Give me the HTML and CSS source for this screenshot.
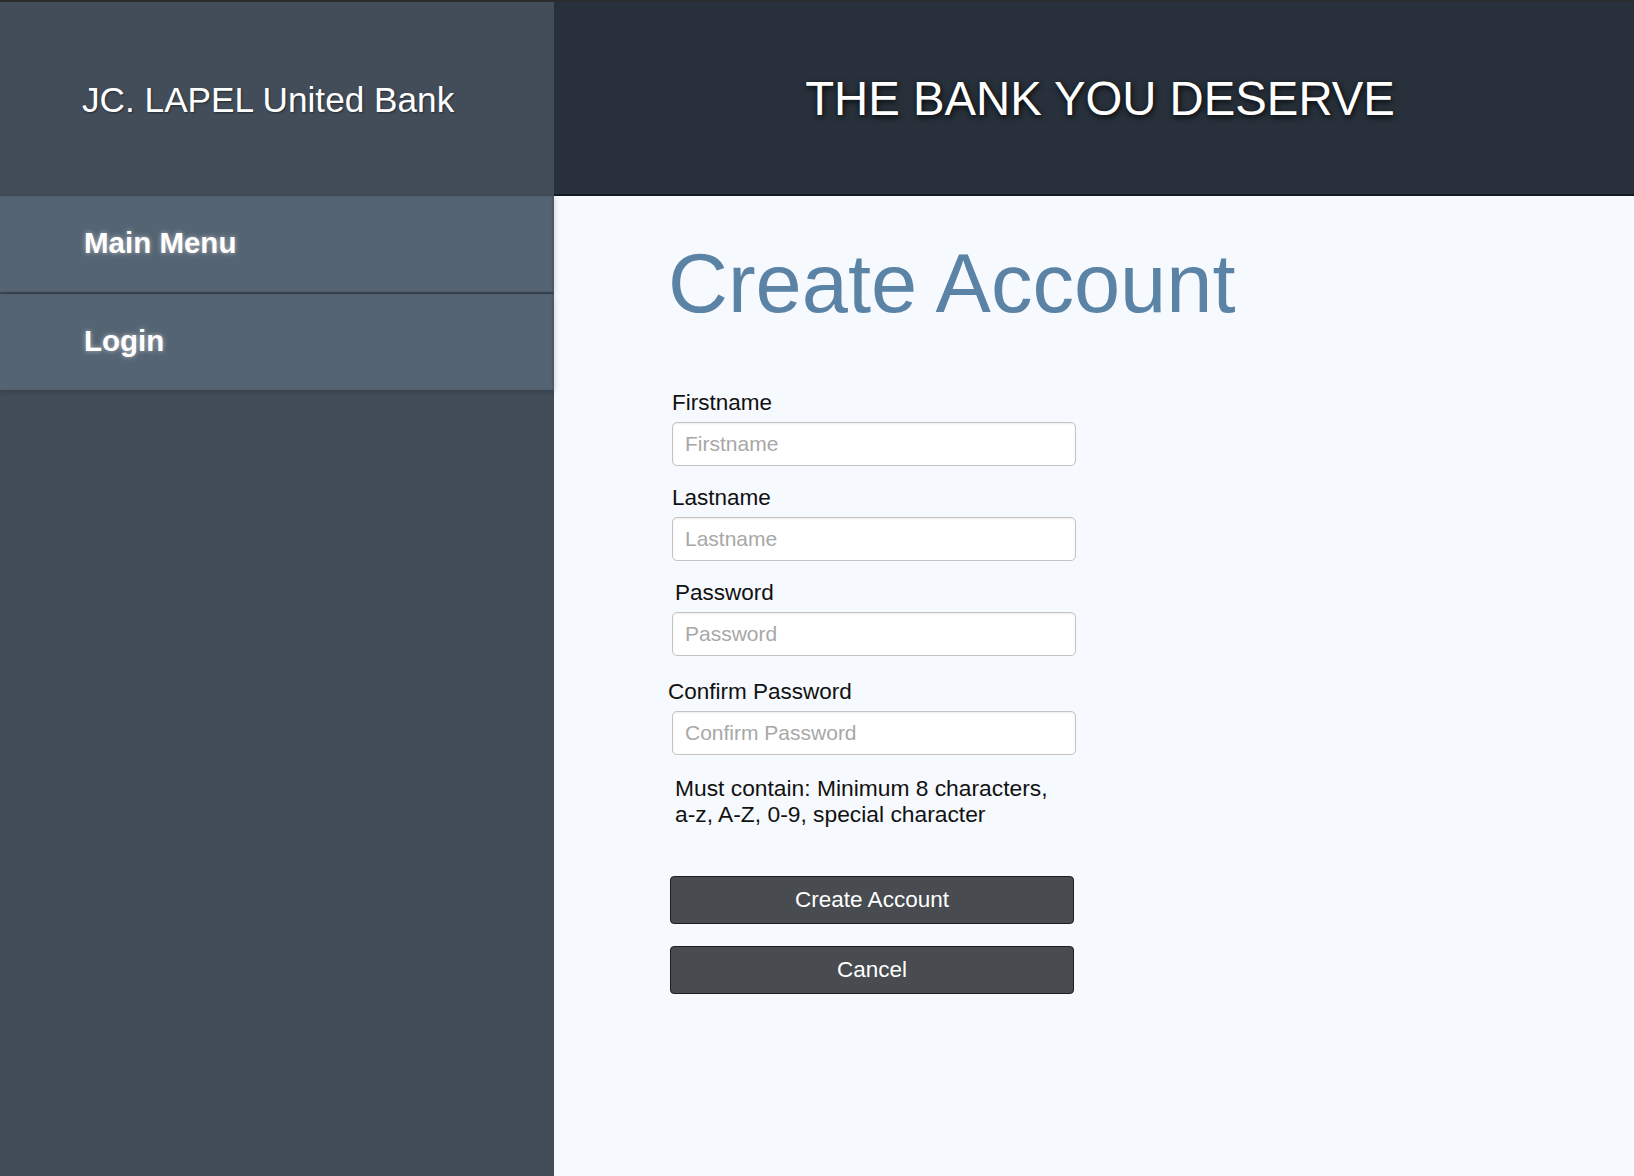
FILE: index.html
```html
<!DOCTYPE html>
<html lang="en">
<head>
<meta charset="utf-8">
<title>Create Account - JC. LAPEL United Bank</title>
<link rel="stylesheet" href="styles.css">
</head>
<body>
<div class="page">
  <aside class="sidebar">
    <div class="brand">JC. LAPEL United Bank</div>
    <nav class="menu">
      <a class="menu-item" href="#">Main Menu</a>
      <a class="menu-item" href="#">Login</a>
    </nav>
  </aside>
  <main class="main">
    <header class="banner">THE BANK YOU DESERVE</header>
    <section class="content">
      <h1 class="title">Create Account</h1>
      <form class="form">
        <div class="field">
          <label class="label">Firstname</label>
          <input class="input" type="text" placeholder="Firstname">
        </div>
        <div class="field">
          <label class="label">Lastname</label>
          <input class="input" type="text" placeholder="Lastname">
        </div>
        <div class="field">
          <label class="label label-indent">Password</label>
          <input class="input" type="password" placeholder="Password">
        </div>
        <div class="field field-spaced">
          <label class="label label-outdent">Confirm Password</label>
          <input class="input" type="password" placeholder="Confirm Password">
        </div>
        <p class="hint">Must contain: Minimum 8 characters,<br>a-z, A-Z, 0-9, special character</p>
        <div class="actions">
          <button class="btn" type="button">Create Account</button>
          <button class="btn" type="button">Cancel</button>
        </div>
      </form>
    </section>
  </main>
</div>
</body>
</html>
```
FILE: styles.css
```css
* { box-sizing: border-box; }

html, body {
  margin: 0;
  padding: 0;
  height: 100%;
}

body {
  font-family: "Liberation Sans", Arial, sans-serif;
  background: #f6f9fd;
  overflow: hidden;
}

.page {
  display: flex;
  height: 100vh;
  border-top: 2px solid #2a2c2e;
}

/* Sidebar */
.sidebar {
  width: 554px;
  flex: none;
  background: #424d59;
  display: flex;
  flex-direction: column;
}

.brand {
  height: 194px;
  display: flex;
  align-items: center;
  padding: 2px 0 0 82px;
  color: #ffffff;
  font-size: 35.2px;
  text-shadow: 1px 1px 2px rgba(0, 0, 0, 0.45);
}

.menu {
  display: flex;
  flex-direction: column;
  gap: 2px;
}

.menu-item {
  height: 96px;
  display: flex;
  align-items: center;
  padding: 0 0 2px 84px;
  background: #556473;
  color: #ffffff;
  font-weight: bold;
  font-size: 29.5px;
  text-decoration: none;
  text-shadow: 0 0 5px rgba(255, 255, 255, 0.55);
  box-shadow: 0 2px 6px rgba(0, 0, 0, 0.2), inset -2px 0 2px rgba(0, 0, 0, 0.12);
}

/* Main */
.main {
  flex: 1;
  display: flex;
  flex-direction: column;
  min-width: 0;
}

.banner {
  height: 194px;
  flex: none;
  background: #28313b;
  border-bottom: 2px solid #161a1e;
  display: flex;
  align-items: center;
  justify-content: center;
  padding: 1px 0 0 12px;
  color: #ffffff;
  font-size: 47.3px;
  text-shadow: 1px 2px 6px rgba(0, 0, 0, 0.95);
}

.content {
  flex: 1;
  padding: 46px 0 0 116px;
}

.title {
  margin: 0 0 65px -2px;
  font-size: 83px;
  line-height: 1;
  font-weight: normal;
  color: #5b83a6;
}

.form {
  width: 406px;
  display: flex;
  flex-direction: column;
}

.field {
  display: flex;
  flex-direction: column;
  margin-bottom: 19px;
}

.field-spaced {
  margin-top: 4px;
}

.label {
  font-size: 22.5px;
  line-height: 26px;
  color: #111111;
  margin-bottom: 6px;
  padding-left: 2px;
}

.label-indent { padding-left: 5px; }
.label-outdent { padding-left: 0; margin-left: -2px; }

.input {
  width: 404px;
  height: 44px;
  margin-left: 2px;
  padding: 0 12px;
  border: 1px solid #c3c3c3;
  border-radius: 5px;
  background: #ffffff;
  font-family: "Liberation Sans", Arial, sans-serif;
  font-size: 21px;
  color: #222222;
  box-shadow: inset 0 1px 2px rgba(0, 0, 0, 0.08);
}

.input::placeholder {
  color: #a8a8a8;
}

.hint {
  margin: 2px 0 0 5px;
  font-size: 22.8px;
  line-height: 25.5px;
  color: #111111;
}

.actions {
  display: flex;
  flex-direction: column;
  gap: 22px;
  margin-top: 49px;
}

.btn {
  width: 404px;
  height: 48px;
  background: #484b4f;
  border: 1px solid #1d1f21;
  border-radius: 4px;
  color: #ffffff;
  font-family: "Liberation Sans", Arial, sans-serif;
  font-size: 22.5px;
  padding: 0;
}
```
